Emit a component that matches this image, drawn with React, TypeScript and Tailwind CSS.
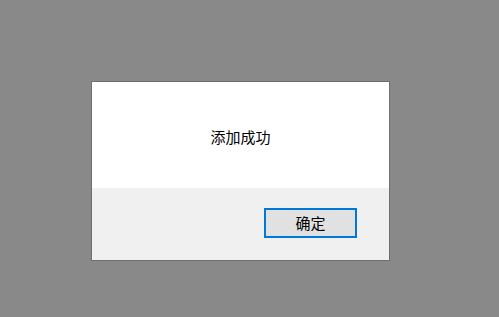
export default function App() {
  return (
    <div
      className="h-[317px] w-[499px] bg-[#898989] pl-[91px] pt-[81px]"
      style={{ fontFamily: '"Microsoft YaHei", "Noto Sans CJK SC", sans-serif' }}
    >
      <div className="flex w-[299px] flex-col border border-[#6f6f6f] bg-white">
        {/* Message */}
        <div className="flex h-[106px] items-center justify-center pt-[5px] text-[15px] text-black">
          添加成功
        </div>

        {/* Footer */}
        <div className="flex h-[72px] items-start justify-end bg-[#f0f0f0] pr-[32px] pt-[20px]">
          <button className="flex h-[30px] w-[93px] items-center justify-center border-2 border-[#0078d7] bg-[#e1e1e1] text-[15px] text-black">
            确定
          </button>
        </div>
      </div>
    </div>
  );
}
